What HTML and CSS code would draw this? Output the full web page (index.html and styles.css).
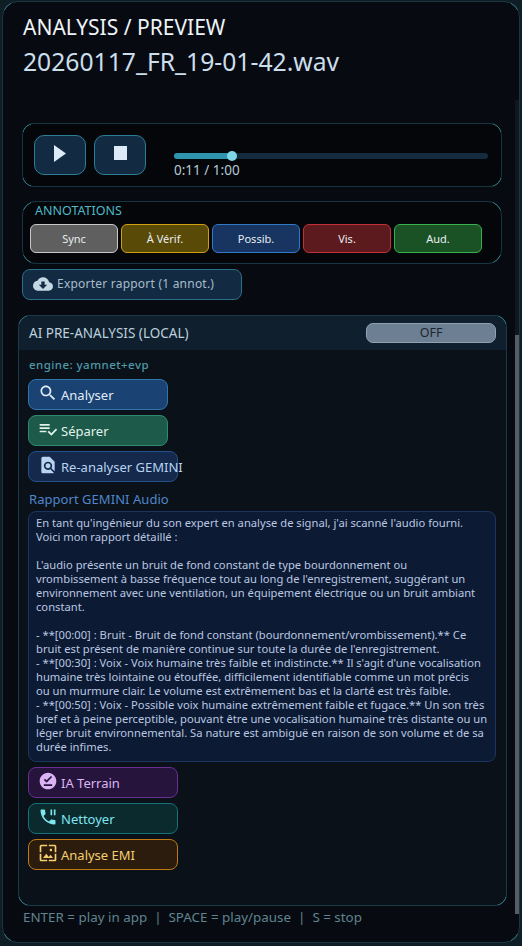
FILE: index.html
```html
<!DOCTYPE html>
<html lang="fr">
<head>
    <meta charset="UTF-8">
    <meta name="viewport" content="width=device-width, initial-scale=1.0">
    <title>Analysis / Preview</title>
    <link rel="stylesheet" href="styles.css">
</head>
<body>

<main class="panel">
    <header class="head">
        <h1>ANALYSIS / PREVIEW</h1>
        <h2>20260117_FR_19-01-42.wav</h2>
    </header>

    <section class="player">
        <button class="ctl">
            <svg width="24" height="24" viewBox="0 0 24 24"><path d="M6 2v17l12-8.500z" fill="#dcebf7"/></svg>
        </button>
        <button class="ctl">
            <svg width="24" height="24" viewBox="0 0 24 24"><path d="M6 3h13v14H6z" fill="#dcebf7"/></svg>
        </button>
        <div class="seek">
            <div class="track">
                <div class="fill"></div>
                <div class="knob"></div>
            </div>
            <div class="time">0:11 / 1:00</div>
        </div>
    </section>

    <section class="annots">
        <div class="annots-title">ANNOTATIONS</div>
        <div class="annots-row">
            <button class="tag tag-sync">Sync</button>
            <button class="tag tag-verif">À Vérif.</button>
            <button class="tag tag-possib">Possib.</button>
            <button class="tag tag-vis">Vis.</button>
            <button class="tag tag-aud">Aud.</button>
        </div>
    </section>

    <button class="export">
        <svg width="24" height="24" viewBox="0 0 24 24"><path fill="#c4d8e4" d="M19.350 10.040C18.670 6.590 15.640 4 12 4 9.110 4 6.600 5.640 5.350 8.040 2.340 8.360 0 10.910 0 14c0 3.310 2.690 6 6 6h13c2.760 0 5-2.240 5-5 0-2.640-2.050-4.780-4.650-4.960zM17 13l-5 5-5-5h3V9h4v4h3z"/></svg>
        <span>Exporter rapport (1 annot.)</span>
    </button>

    <section class="ai">
        <div class="ai-head">
            <span>AI PRE-ANALYSIS (LOCAL)</span>
            <button class="toggle">OFF</button>
        </div>
        <div class="ai-body">
            <div class="engine">engine: yamnet+evp</div>

            <button class="act act-analyse">
                <svg width="20" height="20" viewBox="0 0 24 24"><path d="M15.500 14h-.79l-.28-.27C15.410 12.590 16 11.110 16 9.500 16 5.910 13.090 3 9.500 3S3 5.910 3 9.500 5.910 16 9.500 16c1.610 0 3.090-.59 4.230-1.570l.27.28v.79l5 4.990L20.490 19l-4.990-5zm-6 0C7.010 14 5 11.990 5 9.500S7.010 5 9.500 5 14 7.010 14 9.500 11.990 14 9.500 14z"/></svg>
                <span>Analyser</span>
            </button>
            <button class="act act-separer">
                <svg width="20" height="20" viewBox="0 0 24 24"><path d="M14 10H2v2h12v-2zm0-4H2v2h12V6zM2 16h8v-2H2v2zm19.500-4.500L23 13l-6.990 7-4.510-4.500L13 14l3.010 3 5.490-5.500z"/></svg>
                <span>Séparer</span>
            </button>
            <button class="act wide act-gemini">
                <svg width="20" height="20" viewBox="0 0 24 24"><path d="M20 19.590V8l-6-6H6c-1.100 0-1.990.9-1.990 2L4 20c0 1.100.89 2 1.990 2H18c.45 0 .85-.15 1.190-.4l-4.430-4.430c-.8.52-1.740.83-2.760.83-2.760 0-5-2.240-5-5s2.240-5 5-5 5 2.240 5 5c0 1.020-.31 1.960-.83 2.750L20 19.590zM9 13c0 1.660 1.340 3 3 3s3-1.340 3-3-1.340-3-3-3-3 1.340-3 3z"/></svg>
                <span>Re-analyser GEMINI</span>
            </button>

            <div class="report-title">Rapport GEMINI Audio</div>
            <div class="report">En tant qu'ingénieur du son expert en analyse de signal, j'ai scanné l'audio fourni.
Voici mon rapport détaillé :

L'audio présente un bruit de fond constant de type bourdonnement ou
vrombissement à basse fréquence tout au long de l'enregistrement, suggérant un
environnement avec une ventilation, un équipement électrique ou un bruit ambiant
constant.

- **[00:00] : Bruit - Bruit de fond constant (bourdonnement/vrombissement).** Ce
bruit est présent de manière continue sur toute la durée de l'enregistrement.
- **[00:30] : Voix - Voix humaine très faible et indistincte.** Il s'agit d'une vocalisation
humaine très lointaine ou étouffée, difficilement identifiable comme un mot précis
ou un murmure clair. Le volume est extrêmement bas et la clarté est très faible.
- **[00:50] : Voix - Possible voix humaine extrêmement faible et fugace.** Un son très
bref et à peine perceptible, pouvant être une vocalisation humaine très distante ou un
léger bruit environnemental. Sa nature est ambiguë en raison de son volume et de sa
durée infimes.</div>

            <button class="act wide act-terrain">
                <svg width="20" height="20" viewBox="0 0 24 24"><path d="M12 2C6.500 2 2 6.500 2 12s4.500 10 10 10 10-4.500 10-10S17.500 2 12 2zm5 16H7v-2h10v2zm-6.700-4L7 10.700l1.400-1.400 1.900 1.900 5.300-5.300L17 7.300 10.300 14z"/></svg>
                <span>IA Terrain</span>
            </button>
            <button class="act wide act-nettoyer">
                <svg width="20" height="20" viewBox="0 0 24 24"><path d="M17 3h-2v7h2V3zm3 12.500c-1.250 0-2.450-.2-3.570-.57-.35-.11-.74-.03-1.020.24l-2.200 2.200c-2.830-1.440-5.150-3.750-6.590-6.590l2.200-2.210c.28-.26.36-.65.25-1C8.700 6.450 8.500 5.250 8.500 4c0-.55-.45-1-1-1H4c-.55 0-1 .45-1 1 0 9.390 7.610 17 17 17 .55 0 1-.45 1-1v-3.500c0-.55-.45-1-1-1zM19 3v7h2V3h-2z"/></svg>
                <span>Nettoyer</span>
            </button>
            <button class="act wide act-emi">
                <svg width="20" height="20" viewBox="0 0 24 24"><path d="M4 4h7V2H4c-1.100 0-2 .9-2 2v7h2V4zm6 9l-4 5h12l-3-4-2.030 2.710L10 13zm7-4.500c0-.83-.67-1.500-1.500-1.500S14 7.670 14 8.500s.67 1.500 1.500 1.500S17 9.330 17 8.500zM20 2h-7v2h7v7h2V4c0-1.100-.9-2-2-2zm0 18h-7v2h7c1.100 0 2-.9 2-2v-7h-2v7zM4 13H2v7c0 1.100.9 2 2 2h7v-2H4v-7z"/></svg>
                <span>Analyse EMI</span>
            </button>
        </div>
    </section>

    <footer class="hint">ENTER = play in app &nbsp;|&nbsp; SPACE = play/pause &nbsp;|&nbsp; S = stop</footer>

    <div class="scrollbar"><div class="thumb"></div></div>
</main>

</body>
</html>
```

FILE: styles.css
```css
* {
    box-sizing: border-box;
}
html, body {
    height: 100%;
}
body {
    margin: 0;
    padding: 1px 2px 3px 2px;
    background-color: #0f1e25;
    font-family: "Noto Sans", "Open Sans", sans-serif;
    overflow: hidden;
}
button {
    font-family: inherit;
    padding: 0;
    cursor: pointer;
}

/* bright teal only on the rounded corners of the boxes */
.panel::before, .player::before, .annots::before, .ai::before {
    content: "";
    position: absolute;
    inset: -1px;
    border: 1px solid #337f8c;
    border-radius: inherit;
    pointer-events: none;
    -webkit-mask-image:
        linear-gradient(90deg, #000 9px, transparent 9px, transparent calc(100% - 9px), #000 calc(100% - 9px)),
        linear-gradient(#000 9px, transparent 9px, transparent calc(100% - 9px), #000 calc(100% - 9px));
    mask-image:
        linear-gradient(90deg, #000 9px, transparent 9px, transparent calc(100% - 9px), #000 calc(100% - 9px)),
        linear-gradient(#000 9px, transparent 9px, transparent calc(100% - 9px), #000 calc(100% - 9px));
    -webkit-mask-composite: source-in;
    mask-composite: intersect;
}

.panel {
    position: relative;
    height: 942px;
    padding: 0 16px 0 16px;
    background-color: #070b11;
    border: 1px solid #1a3440;
    border-radius: 16px;
}
.head {
    height: 121px;
    padding: 12px 0 0 4px;
}
.head h1 {
    margin: 0;
    height: 27px;
    font-size: 21px;
    line-height: 27px;
    font-weight: 400;
    color: #eef3f8;
}
.head h2 {
    margin: 4px 0 0 0;
    font-size: 24.700px;
    line-height: 33px;
    font-weight: 400;
    color: #cbdeec;
}
.player {
    position: relative;
    display: flex;
    align-items: flex-start;
    gap: 8px;
    width: 480px;
    height: 64px;
    margin-left: 3px;
    padding: 11px 13px 11px 11px;
    background-color: #04060a;
    border: 1px solid #163540;
    border-radius: 12px;
}
.ctl {
    display: flex;
    align-items: center;
    justify-content: center;
    width: 52px;
    height: 40px;
    background-color: #122a42;
    border: 1px solid #2b7f94;
    border-radius: 10px;
}
.seek {
    flex: 1;
    margin-left: 20px;
    padding-top: 18px;
}
.track {
    position: relative;
    height: 6px;
    background-color: #152a3d;
    border-radius: 3px;
}
.fill {
    width: 58px;
    height: 6px;
    background-color: #2f94ad;
    border-radius: 3px;
}
.knob {
    position: absolute;
    left: 53px;
    top: -2px;
    width: 10px;
    height: 10px;
    background-color: #7fd6e6;
    border-radius: 50%;
}
.time {
    margin-top: 2px;
    font-size: 13.500px;
    line-height: 19px;
    color: #b5c9d6;
}
.annots {
    position: relative;
    width: 480px;
    height: 63px;
    margin: 14px 0 0 3px;
    padding: 0 7px;
    background-color: #04060a;
    border: 1px solid #163540;
    border-radius: 14px;
}
.annots-title {
    height: 17px;
    padding-left: 5px;
    font-size: 12.500px;
    line-height: 17px;
    color: #4db8c8;
}
.annots-row {
    display: flex;
    gap: 3px;
    margin-top: 5px;
}
.tag {
    width: 88px;
    height: 29px;
    font-size: 11px;
    color: #e8edf2;
    border-radius: 6px;
    border: 1px solid;
}
.tag-sync {
    background-color: #5f5f5f;
    border-color: #c8c8c8;
}
.tag-verif {
    background-color: #5a4a08;
    border-color: #d0a010;
}
.tag-possib {
    background-color: #173560;
    border-color: #3278c8;
}
.tag-vis {
    background-color: #5c1a1e;
    border-color: #c03038;
}
.tag-aud {
    background-color: #1a5226;
    border-color: #38b050;
}
.export {
    display: flex;
    align-items: center;
    gap: 4px;
    width: 220px;
    height: 31px;
    margin: 5px 0 0 3px;
    padding: 0 0 2px 10px;
    background-color: #122a42;
    border: 1px solid #2b6f88;
    border-radius: 8px;
    font-size: 12px;
    letter-spacing: 0.220px;
    color: #a9bccb;
}
.export svg {
    width: 20px;
    height: 20px;
}
.ai {
    position: relative;
    display: flex;
    flex-direction: column;
    width: 489px;
    height: 591px;
    margin: 15px 0 0 -1px;
    background-color: #0a1119;
    border: 1px solid #1b3a48;
    border-radius: 12px;
}
.ai-head {
    display: flex;
    align-items: center;
    justify-content: space-between;
    height: 34px;
    padding: 0 10px;
    background-color: #0f1f2d;
    border-radius: 12px 12px 0 0;
    font-size: 13.500px;
    color: #bcd0de;
}
.toggle {
    width: 130px;
    height: 20px;
    padding-bottom: 2px;
    background-color: #6d7f93;
    border: 1px solid #8fa2b4;
    border-radius: 7px;
    font-size: 12.500px;
    color: #1b2530;
}
.ai-body {
    display: flex;
    flex-direction: column;
    align-items: flex-start;
    padding: 6px 9px 7px;
}
.engine {
    height: 17px;
    padding-left: 1px;
    font-size: 11.500px;
    line-height: 17px;
    font-weight: 500;
    color: #4d9aa8;
    letter-spacing: 0.450px;
    margin-bottom: 6px;
}
.act {
    display: flex;
    align-items: center;
    gap: 3px;
    width: 140px;
    height: 31px;
    margin-bottom: 5px;
    padding: 0 0 0 9px;
    border: 1px solid;
    border-radius: 8px;
    font-size: 13px;
    white-space: nowrap;
    overflow: visible;
}
.act.wide {
    width: 150px;
}
.act svg {
    flex: none;
    margin-bottom: 4px;
    fill: currentColor;
}
.act-analyse {
    background-color: #1a4272;
    border-color: #2f76ac;
    color: #e0ecf8;
}
.act-separer {
    background-color: #1e5a4a;
    border-color: #2f8a70;
    color: #e0f2ea;
}
.act-gemini {
    background-color: #14294c;
    border-color: #24508c;
    color: #b8d4f0;
}
.act-terrain {
    background-color: #26143c;
    border-color: #6a2f90;
    color: #dab4f4;
}
.act-nettoyer {
    background-color: #0a2a2e;
    border-color: #14727a;
    color: #7fe6ee;
}
.act-emi {
    background-color: #2c1c0e;
    border-color: #c07a14;
    color: #f4d070;
}
.report-title {
    height: 18px;
    margin-top: 3px;
    padding-left: 1px;
    font-size: 13px;
    line-height: 18px;
    letter-spacing: 0.050px;
    color: #4f86cc;
}
.report {
    width: 468px;
    height: 251px;
    margin: 3px 0 5px 0;
    padding: 4px 7px;
    background-color: #0d1a33;
    border: 1px solid #1c3560;
    border-radius: 8px;
    font-size: 11.200px;
    line-height: 14px;
    color: #b9c8e2;
    white-space: pre;
}
.hint {
    margin: 3px 0 0 4px;
    font-size: 13.400px;
    line-height: 17px;
    color: #5f8490;
}
.scrollbar {
    position: absolute;
    right: 0;
    top: 98px;
    bottom: 30px;
    width: 4px;
    background-color: #10171d;
}
.thumb {
    margin-top: 235px;
    height: 579px;
    background-color: #565d66;
}
```
